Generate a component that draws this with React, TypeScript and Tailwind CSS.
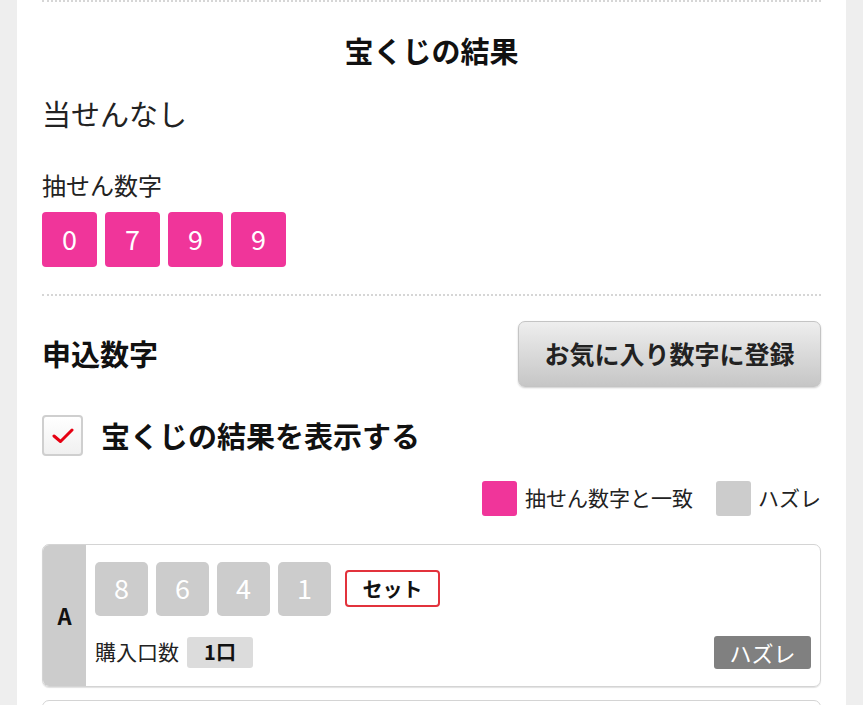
import React from 'react';

const winning = ['0', '7', '9', '9'];
const entries = [{ label: 'A', digits: ['8', '6', '4', '1'], count: '1口', result: 'ハズレ' }];

function DigitBox({ value, hit }: { value: string; hit: boolean }) {
  return (
    <div
      className={
        hit
          ? 'flex h-[55px] w-[55px] items-center justify-center rounded-[4px] bg-[#f0359a] text-[27px] text-white'
          : 'flex h-[54px] w-[53px] items-center justify-center rounded-[5px] bg-[#cccccc] text-[27px] text-white'
      }
    >
      {value}
    </div>
  );
}

function EntryCard({ entry }: { entry: (typeof entries)[number] }) {
  return (
    <div className="flex h-[143px] overflow-hidden rounded-[7px] border border-[#d4d4d4] shadow-[0_1px_1px_rgba(0,0,0,0.12)]">
      <div className="flex w-[43px] items-center justify-center bg-[#cccccc] text-[22px] font-bold text-[#111]">
        {entry.label}
      </div>
      <div className="flex flex-1 flex-col pl-[9px] pr-[9px] pt-[17px]">
        <div className="flex items-center gap-[8px]">
          {entry.digits.map((d, i) => (
            <DigitBox key={i} value={d} hit={false} />
          ))}
          <button className="ml-[6px] flex h-[37px] w-[95px] items-center justify-center rounded-[4px] border-2 border-[#e2323c] bg-white text-[20px] font-bold text-[#111]">
            セット
          </button>
        </div>
        <div className="mt-[20px] flex items-center">
          <span className="text-[21px] text-[#222]">購入口数</span>
          <span className="ml-[8px] flex h-[31px] w-[66px] items-center justify-center rounded-[3px] bg-[#dcdcdc] text-[20px] font-bold text-[#111]">
            {entry.count}
          </span>
          <span className="ml-auto flex h-[33px] w-[97px] items-center justify-center rounded-[3px] bg-[#808080] text-[22px] text-white">
            {entry.result}
          </span>
        </div>
      </div>
    </div>
  );
}

export default function App() {
  return (
    <div
      className="flex h-[705px] w-[863px] justify-center overflow-hidden bg-[#eeeeee]"
      style={{ fontFamily: '"Noto Sans CJK JP", "Noto Sans", sans-serif' }}
    >
      <div className="w-[829px] bg-white px-[25px]">
        <div className="border-t-2 border-dotted border-[#d6d6d6]" />

        <h2 className="mt-[29px] text-center text-[29px] font-bold leading-[38px] text-[#111]">宝くじの結果</h2>

        <p className="mt-[26px] text-[29px] leading-[36px] text-[#222]">当せんなし</p>

        <p className="mt-[38px] text-[24px] leading-[32px] text-[#222]">抽せん数字</p>
        <div className="mt-[11px] flex gap-[8px]">
          {winning.map((d, i) => (
            <DigitBox key={i} value={d} hit />
          ))}
        </div>

        <div className="mt-[27px] border-t-2 border-dotted border-[#d6d6d6]" />

        <div className="mt-[25px] flex items-center justify-between">
          <h3 className="text-[29px] font-bold text-[#111]">申込数字</h3>
          <button className="h-[66px] w-[303px] rounded-[7px] border border-[#c4c4c4] bg-gradient-to-b from-[#eeeeee] to-[#c6c6c6] text-[25px] font-bold text-[#222] shadow-[0_1px_2px_rgba(0,0,0,0.2)]">
            お気に入り数字に登録
          </button>
        </div>

        <label className="mt-[27px] flex items-center">
          <span className="flex h-[41px] w-[41px] items-center justify-center rounded-[4px] border-2 border-[#cfcfcf] bg-gradient-to-b from-white to-[#f0f0f0]">
            <svg width="22" height="18" viewBox="0 0 22 18" fill="none">
              <path d="M2 9 L8.5 14.5 L20 3" stroke="#e60012" strokeWidth="3" strokeLinecap="round" strokeLinejoin="round" />
            </svg>
          </span>
          <span className="ml-[18px] text-[29px] font-bold text-[#111]">宝くじの結果を表示する</span>
        </label>

        <div className="mt-[23px] flex items-center justify-end">
          <span className="h-[35px] w-[35px] rounded-[3px] bg-[#f0359a]" />
          <span className="ml-[8px] text-[21px] text-[#222]">抽せん数字と一致</span>
          <span className="ml-[23px] h-[35px] w-[35px] rounded-[3px] bg-[#cccccc]" />
          <span className="ml-[7px] text-[21px] text-[#222]">ハズレ</span>
        </div>

        <div className="mt-[28px]">
          {entries.map((e) => (
            <EntryCard key={e.label} entry={e} />
          ))}
        </div>
        <div className="mt-[13px] h-[60px] rounded-t-[7px] border border-[#d4d4d4]" />
      </div>
    </div>
  );
}
